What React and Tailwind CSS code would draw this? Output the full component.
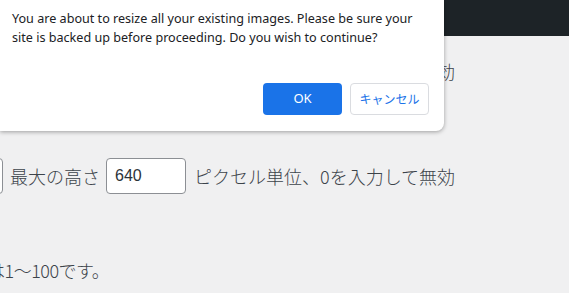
export default function App() {
  const jp = { fontFamily: '"Noto Sans CJK JP", "Noto Sans", sans-serif' };

  return (
    <div className="relative w-[569px] h-[293px] overflow-hidden bg-[#f0f0f1] text-[#3c434a] font-['Noto_Sans','Noto_Sans_CJK_JP',sans-serif]">
      <div className="h-[36px] bg-[#1d2327]" />

      <div className="mt-[17px] h-[36px] w-[455px] flex items-center justify-end whitespace-nowrap text-[18px] font-light font-['Noto_Sans_CJK_JP',sans-serif]">
        ピクセル単位、0を入力して無効
      </div>

      <div className="mt-[69px] h-[36px] flex items-center whitespace-nowrap text-[18px] font-light font-['Noto_Sans_CJK_JP',sans-serif]">
        <div className="w-[80px] h-[36px] -ml-[77px] shrink-0 rounded-[4px] border border-[#8c8f94] bg-white" />
        <span className="ml-[7px]">最大の高さ</span>
        <div className="ml-[6px] w-[80px] h-[36px] shrink-0 rounded-[4px] border border-[#8c8f94] bg-white flex items-center pl-[8px] text-[16px] font-normal text-[#2c3338] font-['Liberation_Sans',sans-serif]">
          640
        </div>
        <span className="ml-[8px]">ピクセル単位、0を入力して無効</span>
      </div>

      <div className="mt-[64px] h-[24px] flex items-center whitespace-nowrap text-[18px] font-light -ml-[13px] tracking-[-0.5px] font-['Noto_Sans_CJK_JP',sans-serif]">
        は1～100です。
      </div>

      <div className="absolute left-0 top-0 w-[444px] h-[131px] bg-white rounded-br-[8px] shadow-[0_1px_4px_rgba(0,0,0,0.35)] text-[#202124]">
        <p className="w-[425px] pl-[12px] pt-[9px] text-[12.6px] leading-[19px] font-['Noto_Sans',sans-serif]">
          You are about to resize all your existing images. Please be sure your site is backed up before proceeding. Do you wish to continue?
        </p>
        <div className="absolute left-[263px] top-[83px] flex gap-[8px]">
          <button className="w-[79px] h-[32px] rounded-[4px] bg-[#1a73e8] text-white text-[13px] font-['Noto_Sans',sans-serif]">
            OK
          </button>
          <button className="w-[79px] h-[32px] rounded-[4px] bg-white border border-[#dadce0] text-[#1a73e8] text-[12px]" style={jp}>
            キャンセル
          </button>
        </div>
      </div>
    </div>
  );
}
